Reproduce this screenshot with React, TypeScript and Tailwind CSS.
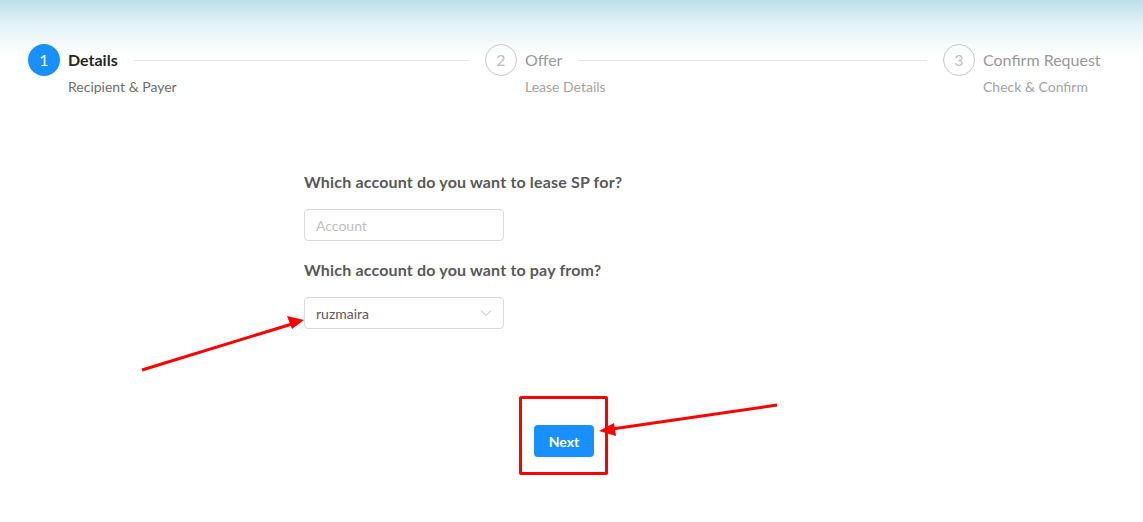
import React from "react";

const font = { fontFamily: 'Lato, "Noto Sans", sans-serif' };

function Circle({ n, active }: { n: number; active?: boolean }) {
  return active ? (
    <div className="w-8 h-8 rounded-full bg-[#1890ff] text-white flex items-center justify-center text-[16px] shrink-0">
      {n}
    </div>
  ) : (
    <div className="w-8 h-8 rounded-full border border-[#c8c8c8] text-[#c0c0c0] flex items-center justify-center text-[16px] shrink-0">
      {n}
    </div>
  );
}

function Step({
  n,
  title,
  desc,
  active,
  line,
  className,
}: {
  n: number;
  title: string;
  desc: string;
  active?: boolean;
  line?: boolean;
  className: string;
}) {
  return (
    <div className={"flex items-start " + className}>
      <Circle n={n} active={active} />
      <div className="ml-2 flex-1 min-w-0">
        <div className="flex items-center h-8">
          <span
            className={
              "text-[16px] whitespace-nowrap " +
              (active ? "text-[#262626] font-bold" : "text-[#999999]")
            }
          >
            {title}
          </span>
          {line && <div className="flex-1 ml-4 h-px bg-[#e4e4e4]" />}
        </div>
        <div
          className={
            "text-[14px] leading-[22px] " +
            (active ? "text-[#6e6e6e]" : "text-[#a3a3a3]")
          }
        >
          {desc}
        </div>
      </div>
    </div>
  );
}

export default function App() {
  return (
    <div
      className="relative w-[1143px] h-[522px] overflow-hidden bg-[linear-gradient(180deg,#bde0ea_0px,#e4f2f6_25px,#ffffff_55px)]"
      style={font}
    >
      <div className="flex pl-[28px] pt-[44px]">
        <Step n={1} title="Details" desc="Recipient & Payer" active line className="w-[441px]" />
        <Step n={2} title="Offer" desc="Lease Details" line className="w-[458px] pl-[16px]" />
        <Step n={3} title="Confirm Request" desc="Check & Confirm" className="pl-[16px]" />
      </div>

      <div className="pl-[304px] pt-[72px]">
        <div className="text-[16px] leading-[24px] text-[#595959] font-bold tracking-[0.17px]">
          Which account do you want to lease SP for?
        </div>
        <div className="mt-[15px] w-[200px] h-8 rounded-[4px] border border-[#d9d9d9] px-[11px] flex items-center text-[14px] text-[#bfbfbf] bg-white">
          Account
        </div>
        <div className="mt-[17px] text-[16px] leading-[24px] text-[#595959] font-bold tracking-[0.17px]">
          Which account do you want to pay from?
        </div>
        <div className="mt-[15px] w-[200px] h-8 rounded-[4px] border border-[#d9d9d9] pl-[11px] pr-[11px] flex items-center justify-between text-[14px] text-[#595959] bg-white">
          <span>ruzmaira</span>
          <svg width="12" height="12" viewBox="0 0 12 12" fill="none">
            <path d="M1 3.5 L6 8.5 L11 3.5" stroke="#bfbfbf" strokeWidth="1" />
          </svg>
        </div>
      </div>

      <div className="pl-[534px] pt-[96px]">
        <button className="w-[60px] h-8 rounded-[4px] bg-[#1890ff] text-white text-[14px] font-bold">
          Next
        </button>
      </div>

      {/* annotations */}
      <div className="absolute left-[519px] top-[396px] w-[89px] h-[79px] border-[3px] border-[#ff0000] rounded-[2px]" />
      <svg className="absolute left-0 top-0" width="1143" height="522" viewBox="0 0 1143 522">
        <line x1="142" y1="370" x2="292" y2="324" stroke="#ff0000" strokeWidth="3" />
        <polygon points="304,320 287,316 292,329" fill="#ff0000" />
        <line x1="777" y1="405" x2="612" y2="429" stroke="#ff0000" strokeWidth="3" />
        <polygon points="599,431 614,423 616,436" fill="#ff0000" />
      </svg>
    </div>
  );
}
